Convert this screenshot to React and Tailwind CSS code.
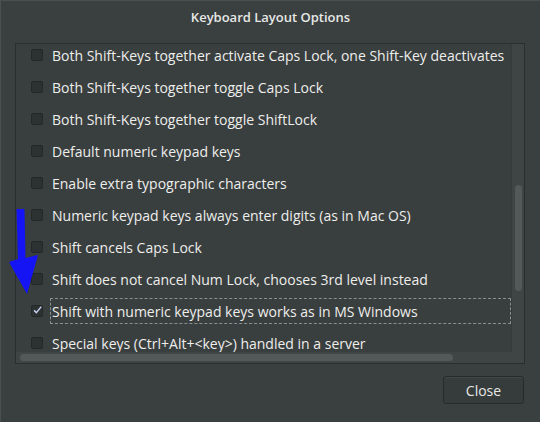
const options = [
  "Both Shift-Keys together activate Caps Lock, one Shift-Key deactivates",
  "Both Shift-Keys together toggle Caps Lock",
  "Both Shift-Keys together toggle ShiftLock",
  "Default numeric keypad keys",
  "Enable extra typographic characters",
  "Numeric keypad keys always enter digits (as in Mac OS)",
  "Shift cancels Caps Lock",
  "Shift does not cancel Num Lock, chooses 3rd level instead",
  "Shift with numeric keypad keys works as in MS Windows",
  "Special keys (Ctrl+Alt+<key>) handled in a server",
]

const Checkbox = ({ checked }) => (
  <div className="w-[12px] h-[12px] rounded-[2px] bg-[#2c3131] border border-[#232727] flex items-center justify-center shrink-0">
    {checked && (
      <svg width="12" height="12" viewBox="0 0 12 12" className="-mt-[2px] ml-[1px]">
        <path d="M1.5 6.5 L4.5 9.5 L11 1.5" fill="none" stroke="#c5cfeb" strokeWidth="2" />
      </svg>
    )}
  </div>
)

const OptionRow = ({ label, checked }) => (
  <div className="h-[32px] flex items-center pl-[15px] shrink-0">
    <Checkbox checked={checked} />
    <div
      className={`ml-[7px] pl-[1px] flex-1 h-[26px] flex items-center whitespace-nowrap ${
        checked ? "border border-dashed border-[#8a8f8f]" : "border border-transparent"
      }`}
    >
      {label}
    </div>
  </div>
)

export default function App() {
  return (
    <div
      className="relative w-[540px] h-[422px] bg-[#3a3f3f] text-[#eeeeec] border-t border-l border-[#4a5050] flex flex-col overflow-hidden"
      style={{ fontFamily: '"Open Sans", "Noto Sans", sans-serif' }}
    >
      <div className="h-[33px] flex items-center justify-center text-[13px] font-semibold text-[#e6e8e6]">
        Keyboard Layout Options
      </div>

      <div className="ml-[14px] mt-[9px] w-[510px] h-[321px] border border-[#2a2e2e] bg-[#393e3e] flex flex-col">
        <div className="flex flex-1 min-h-0">
          <div className="flex-1 overflow-hidden text-[14px]">
            <div className="-mt-[5px] flex flex-col">
              {options.map((o, i) => (
                <OptionRow key={o} label={o} checked={i === 8} />
              ))}
            </div>
          </div>
          <div className="w-[13px] bg-[#3f4545] border-l border-[#353a3a] flex justify-center">
            <div className="w-[7px] h-[106px] mt-[141px] rounded-[4px] bg-[#535959]" />
          </div>
        </div>
        <div className="h-[11px] bg-[#3f4545] flex items-center pl-[4px]">
          <div className="w-[433px] h-[7px] rounded-[4px] bg-[#535959]" />
        </div>
      </div>

      <div className="flex justify-end pr-[16px] mt-[12px]">
        <button className="w-[81px] h-[28px] rounded-[3px] bg-[#363b3b] border border-[#262a2a] text-[14px] text-[#e6e8e6] shadow-[inset_0_1px_0_#434848]">
          Close
        </button>
      </div>

      <svg className="absolute left-0 top-0" width="60" height="310" viewBox="0 0 60 310">
        <path d="M15.5 208 L23.5 208 L24.5 257 L37 254 L26 293 L8 261 L17 258 Z" fill="#1414f5" />
      </svg>
    </div>
  )
}
